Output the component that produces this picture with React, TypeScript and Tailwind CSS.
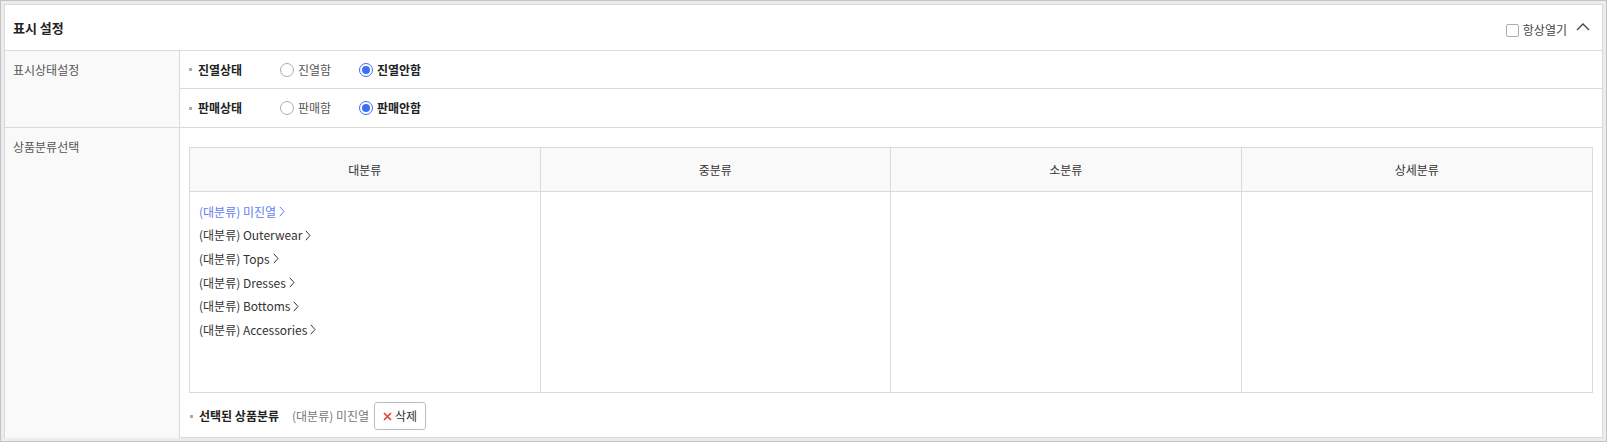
import { useState } from "react";

const FONT = "font-['Malgun_Gothic','Noto_Sans_CJK_KR','Noto_Sans',sans-serif]";

const CATEGORIES = ["미진열", "Outerwear", "Tops", "Dresses", "Bottoms", "Accessories"];
const COLUMNS = ["대분류", "중분류", "소분류", "상세분류"];

function Chevron() {
  return (
    <svg width="6" height="11" viewBox="0 0 6 11" className="ml-[3px] inline-block">
      <path d="M0.8 0.8 L5 5.5 L0.8 10.2" fill="none" stroke="currentColor" strokeWidth="1" />
    </svg>
  );
}

function Radio({ checked, label }: { checked: boolean; label: string }) {
  return (
    <label className="flex items-center gap-[4px]">
      {checked ? (
        <span className="flex h-[14px] w-[14px] items-center justify-center rounded-full border border-[#3d6ef5] bg-white">
          <span className="h-[8px] w-[8px] rounded-full bg-[#3d6ef5]" />
        </span>
      ) : (
        <span className="h-[14px] w-[14px] rounded-full border border-[#a9adb8] bg-white" />
      )}
      <span className={checked ? "font-bold text-[#222]" : "text-[#555]"}>{label}</span>
    </label>
  );
}

function StatusRow({ title, on, off }: { title: string; on: string; off: string }) {
  return (
    <div className="flex h-full items-center pl-[9px]">
      <span className="mr-[6px] h-[3px] w-[3px] bg-[#aaa]" />
      <span className="w-[82px] font-bold text-[#222]">{title}</span>
      <div className="w-[79px]">
        <Radio checked={false} label={on} />
      </div>
      <Radio checked label={off} />
    </div>
  );
}

export default function App() {
  const [selected] = useState(0);

  return (
    <div className={`${FONT} h-[443px] w-[1607px] bg-white text-[12px] text-[#333]`}>
      <div className="h-[442px] border border-[#c4c4c8] bg-[#ececef] p-[3px]">
        <div className="h-full border border-[#dadada] bg-white">
          {/* Header */}
          <div className="flex h-[46px] items-center justify-between border-b border-[#dadada] pl-[8px] pr-[12px]">
            <h2 className="mt-[1px] text-[13px] font-bold text-[#222]">표시 설정</h2>
            <div className="mt-[5px] flex items-center">
              <span className="h-[13px] w-[13px] rounded-[2px] border border-[#a9adb8] bg-white" />
              <span className="ml-[4px] text-[12px] text-[#444]">항상열기</span>
              <svg width="14" height="8" viewBox="0 0 14 8" className="ml-[9px] mb-[6px]">
                <path d="M1 7 L7 1 L13 7" fill="none" stroke="#444" strokeWidth="1.3" />
              </svg>
            </div>
          </div>

          {/* 표시상태설정 */}
          <div className="flex border-b border-[#dadada]">
            <div className="w-[175px] shrink-0 border-r border-[#dadada] bg-[#f9f9f9] pl-[8px] pt-[10px] text-[#555]">
              표시상태설정
            </div>
            <div className="flex-1">
              <div className="h-[38px] border-b border-[#dadada]">
                <StatusRow title="진열상태" on="진열함" off="진열안함" />
              </div>
              <div className="h-[38px]">
                <StatusRow title="판매상태" on="판매함" off="판매안함" />
              </div>
            </div>
          </div>

          {/* 상품분류선택 */}
          <div className="flex h-[310px]">
            <div className="w-[175px] shrink-0 border-r border-[#dadada] bg-[#f9f9f9] pl-[8px] pt-[10px] text-[#555]">
              상품분류선택
            </div>
            <div className="flex-1 pl-[9px] pr-[9px] pt-[19px]">
              <div className="grid w-[1404px] grid-cols-4 border border-[#dadada]">
                {COLUMNS.map((col, i) => (
                  <div
                    key={col}
                    className={`flex h-[44px] items-center justify-center border-b border-[#dadada] bg-[#f9f9f9] text-[#333] ${
                      i < 3 ? "border-r" : ""
                    }`}
                  >
                    {col}
                  </div>
                ))}
                <div className="h-[200px] border-r border-[#dadada] pl-[9px] pt-[8px]">
                  {CATEGORIES.map((name, i) => (
                    <div
                      key={name}
                      className={`flex h-[23.6px] items-center ${
                        i === selected ? "text-[#5f7cf2]" : "text-[#333]"
                      }`}
                    >
                      (대분류) {name}
                      <Chevron />
                    </div>
                  ))}
                </div>
                <div className="border-r border-[#dadada]" />
                <div className="border-r border-[#dadada]" />
                <div />
              </div>

              <div className="mt-[9px] flex items-center pl-[1px]">
                <span className="mr-[6px] h-[3px] w-[3px] bg-[#aaa]" />
                <span className="font-bold text-[#222]">선택된 상품분류</span>
                <span className="ml-[13px] text-[#777]">(대분류) 미진열</span>
                <button className="ml-[5px] flex h-[28px] w-[52px] items-center justify-center gap-[3px] rounded-[3px] border border-[#b9bcc4] bg-white text-[#333]">
                  <svg width="9" height="9" viewBox="0 0 9 9">
                    <path d="M1 1 L8 8 M8 1 L1 8" stroke="#e8402a" strokeWidth="1.6" />
                  </svg>
                  삭제
                </button>
              </div>
            </div>
          </div>
        </div>
      </div>
    </div>
  );
}
